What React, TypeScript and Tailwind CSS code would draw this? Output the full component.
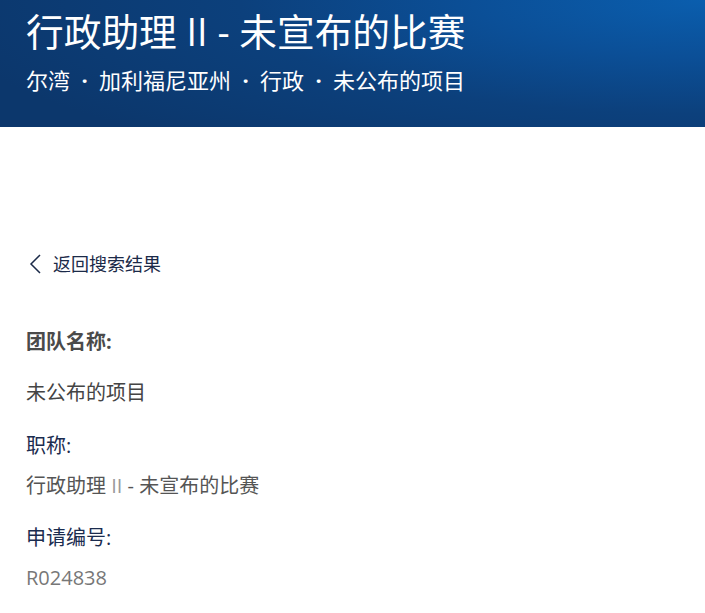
import React from "react";

function Dot() {
  return <span className="inline-block w-[29px] text-center font-bold">·</span>;
}

export default function App() {
  const font = "font-['Open_Sans','Noto_Sans_CJK_SC',sans-serif]";
  return (
    <div className={`w-[705px] h-[613px] bg-white overflow-hidden ${font}`}>
      <header className="h-[127px] bg-[radial-gradient(ellipse_110%_150%_at_100%_0%,#0a5eae_0%,#0b4f97_30%,#0c407c_60%,#0c376c_100%)] pl-[26px] pt-[10px] text-white">
        <h1 className="text-[37.7px] leading-[44px] font-normal">行政助理 II - 未宣布的比赛</h1>
        <p className="mt-[11px] text-[22px] leading-[30px]">
          尔湾<Dot />加利福尼亚州<Dot />行政<Dot />未公布的项目
        </p>
      </header>
      <main className="pl-[26px]">
        <a className="mt-[125px] flex items-center gap-[8px] text-[18px] leading-[24px] text-[#1b2a48]">
          <svg width="18" height="22" viewBox="0 0 18 22" fill="none" className="ml-[1px]">
            <path d="M13 2 L4 11 L13 20" stroke="#1b2a48" strokeWidth="1.5" />
          </svg>
          <span>返回搜索结果</span>
        </a>
        <div className="mt-[54px] text-[20px] leading-[24px] font-bold text-[#4a4a4a]">团队名称:</div>
        <div className="mt-[27px] text-[20px] leading-[24px] text-[#444]">未公布的项目</div>
        <div className="mt-[29px] text-[20px] leading-[24px] text-[#1b2c4f]">职称:</div>
        <div className="mt-[16px] text-[20px] leading-[24px] text-[#555]">
          行政助理 <span className="text-[#9a9a9a]">II</span> - 未宣布的比赛
        </div>
        <div className="mt-[28px] text-[20px] leading-[24px] text-[#1b2c4f]">申请编号:</div>
        <div className="mt-[16px] text-[20px] leading-[24px] text-[#777]">R024838</div>
      </main>
    </div>
  );
}
